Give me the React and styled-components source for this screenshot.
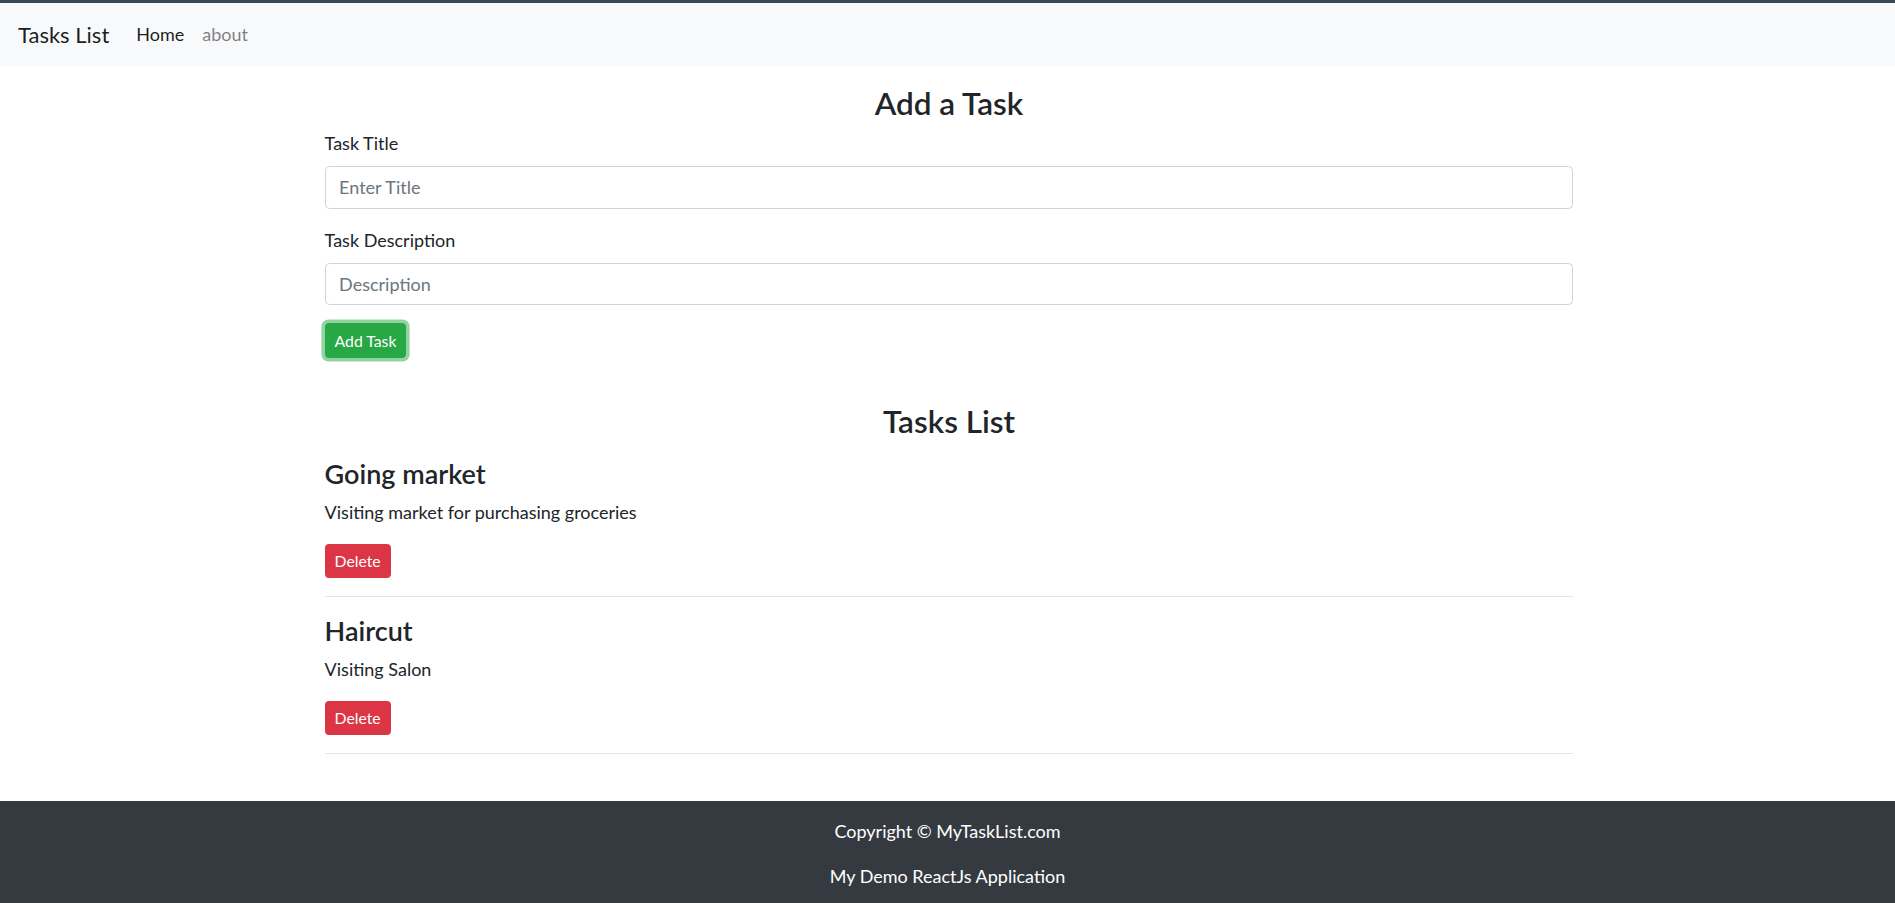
import React from "react";
import styled, { createGlobalStyle } from "styled-components";

const GlobalStyle = createGlobalStyle`
  * { box-sizing: border-box; }
  body {
    margin: 0;
    font-family: "Segoe UI", Lato, "Liberation Sans", sans-serif;
    font-size: 18px;
    line-height: 1.5;
    color: #212529;
    background: #fff;
  }
`;

const Navbar = styled.nav`
  display: flex;
  align-items: center;
  padding: 9px 18px;
  background: #f8f9fa;
  border-top: 3px solid #3b4852;
`;

const Brand = styled.a`
  font-size: 22px;
  line-height: 33.75px;
  padding: 5.6px 0;
  margin-right: 18px;
  color: rgba(0, 0, 0, 0.9);
  text-decoration: none;
`;

const NavLink = styled.a`
  padding: 9px;
  color: ${(p) => (p.$active ? "rgba(0, 0, 0, 0.9)" : "rgba(0, 0, 0, 0.5)")};
  text-decoration: none;
`;

const Container = styled.main`
  width: 1248.75px;
  margin-left: calc(50% - 622.9px);
  padding: 17px 0 30px;
`;

const Heading = styled.h3`
  font-size: 31.5px;
  font-weight: 600;
  line-height: 1.2;
  text-align: center;
  padding-top: 2px;
  margin: ${(p) => (p.$spaced ? "43.5px 0 16px" : "0 0 7px")};
`;

const FormGroup = styled.div`
  margin-bottom: 18px;
`;

const Label = styled.label`
  display: inline-block;
  margin-bottom: 9px;
`;

const Input = styled.input`
  display: block;
  width: 100%;
  height: 42.75px;
  padding: 6.75px 13.5px;
  font: inherit;
  color: #495057;
  border: 1px solid #ced4da;
  border-radius: 4.5px;
  outline: none;

  &::placeholder {
    color: #6c757d;
  }
`;

const Button = styled.button`
  display: inline-block;
  font-family: inherit;
  font-size: 15.75px;
  line-height: 1.5;
  padding: 4.5px 9px;
  border-radius: 3.6px;
  color: #fff;
  cursor: pointer;
  background: ${(p) => (p.$variant === "success" ? "#28a745" : "#dc3545")};
  border: 1px solid ${(p) => (p.$variant === "success" ? "#28a745" : "#dc3545")};
  box-shadow: ${(p) => (p.$focused ? "0 0 0 3.6px rgba(40, 167, 69, 0.5)" : "none")};
`;

const TaskTitle = styled.h4`
  font-size: 27px;
  font-weight: 600;
  line-height: 1.2;
  padding-top: 1px;
  margin: 0 0 8px;
`;

const TaskDesc = styled.p`
  margin: 0 0 18px;
`;

const Divider = styled.hr`
  margin: 18px 0 17px;
  border: 0;
  border-top: 1px solid rgba(0, 0, 0, 0.1);
`;

const Footer = styled.footer`
  padding: 17px 0 1px;
  background: #343a40;
  color: #fff;
  text-align: center;
`;

const FooterText = styled.p`
  margin: 0 0 18px;
`;

const tasks = [
  { id: 1, title: "Going market", desc: "Visiting market for purchasing groceries" },
  { id: 2, title: "Haircut", desc: "Visiting Salon" },
];

export default function App() {
  return (
    <>
      <GlobalStyle />
      <Navbar>
        <Brand href="#">Tasks List</Brand>
        <NavLink href="#" $active>Home</NavLink>
        <NavLink href="#">about</NavLink>
      </Navbar>

      <Container>
        <Heading>Add a Task</Heading>
        <form onSubmit={(e) => e.preventDefault()}>
          <FormGroup>
            <Label htmlFor="title">Task Title</Label>
            <Input id="title" type="text" placeholder="Enter Title" />
          </FormGroup>
          <FormGroup>
            <Label htmlFor="desc">Task Description</Label>
            <Input id="desc" type="text" placeholder="Description" />
          </FormGroup>
          <Button type="submit" $variant="success" $focused>Add Task</Button>
        </form>

        <Heading $spaced>Tasks List</Heading>
        {tasks.map((t) => (
          <div key={t.id}>
            <TaskTitle>{t.title}</TaskTitle>
            <TaskDesc>{t.desc}</TaskDesc>
            <Button $variant="danger">Delete</Button>
            <Divider />
          </div>
        ))}
      </Container>

      <Footer>
        <FooterText>Copyright © MyTaskList.com</FooterText>
        <FooterText>My Demo ReactJs Application</FooterText>
      </Footer>
    </>
  );
}
